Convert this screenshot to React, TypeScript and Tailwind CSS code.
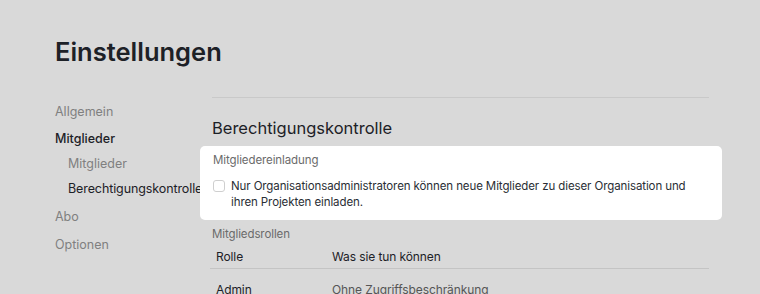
import React from "react";

export default function App() {
  return (
    <div
      className="w-[760px] h-[294px] overflow-hidden bg-[#d9d9d9] pl-[55px] pt-[36px]"
      style={{ fontFamily: "Inter, 'Noto Sans', sans-serif" }}
    >
      <h1 className="text-[25.5px] leading-[32px] font-semibold text-[#1d2127]">
        Einstellungen
      </h1>
      <div className="flex mt-[29px]">
        <nav className="w-[145px] shrink-0 mr-[12px] pt-[6px] text-[12.5px] leading-[18px]">
          <div className="h-[27px] text-[#808080]">Allgemein</div>
          <div className="h-[25px] text-[#1d2127] font-medium">Mitglieder</div>
          <div className="h-[25px] pl-[13px] text-[#808080]">Mitglieder</div>
          <div className="h-[28px] pl-[13px] text-[#1d2127] whitespace-nowrap tracking-[-0.1px]">
            Berechtigungskontrolle
          </div>
          <div className="h-[28px] text-[#808080]">Abo</div>
          <div className="h-[28px] text-[#808080]">Optionen</div>
        </nav>
        <main className="w-[497px] border-t border-[#c9c9c9]">
          <h2 className="mt-[18px] text-[16.5px] leading-[24px] font-normal text-[#1d2127]">
            Berechtigungskontrolle
          </h2>
          <div className="relative z-10 mt-[6px] -ml-[12px] -mr-[13px] bg-white rounded-[5px] pl-[13px] pr-[13px] pt-[6px] pb-[10px]">
            <div className="text-[11.5px] leading-[16px] text-[#6b6b6b] tracking-[-0.1px]">Mitgliedereinladung</div>
            <label className="mt-[10px] flex items-start gap-[6px]">
              <span className="mt-[2px] w-[12px] h-[12px] shrink-0 rounded-[3px] border border-[#cfcfcf] bg-white" />
              <span className="text-[11.5px] leading-[16px] text-[#2a2e34] tracking-[-0.1px]">
                Nur Organisationsadministratoren können neue Mitglieder zu dieser Organisation und
                ihren Projekten einladen.
              </span>
            </label>
          </div>
          <div className="mt-[6px] text-[11.5px] leading-[16px] text-[#6b6b6b] tracking-[-0.1px]">Mitgliedsrollen</div>
          <div className="mt-[3px] -ml-[2px]">
            <div className="flex h-[24px] items-center border-b border-[#c4c4c4] text-[12px] text-[#1d2127] tracking-[-0.1px]">
              <div className="w-[122px] pl-[6px]">Rolle</div>
              <div>Was sie tun können</div>
            </div>
            <div className="flex pt-[13px] text-[12px] leading-[16px] tracking-[-0.1px]">
              <div className="w-[122px] pl-[6px] text-[#1d2127]">Admin</div>
              <div className="text-[#555]">Ohne Zugriffsbeschränkung</div>
            </div>
          </div>
        </main>
      </div>
    </div>
  );
}
